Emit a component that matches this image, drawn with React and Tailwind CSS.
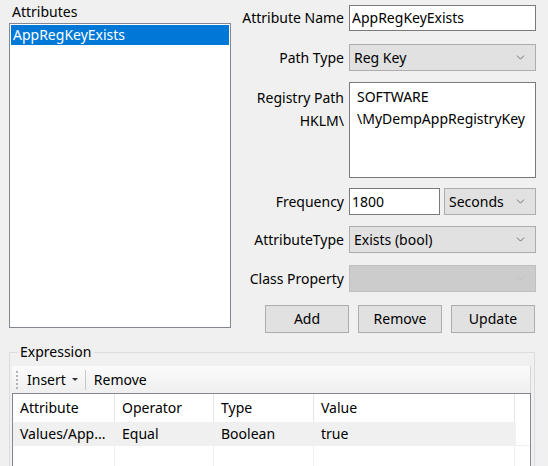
import { ChevronDown } from "lucide-react";

const FONT = { fontFamily: "'Noto Sans', 'Open Sans', sans-serif" };

const COLS = [
  { label: "Attribute", width: "w-[102px]", value: "Values/App..." },
  { label: "Operator", width: "w-[99px]", value: "Equal" },
  { label: "Type", width: "w-[100px]", value: "Boolean" },
  { label: "Value", width: "w-[201px]", value: "true" },
];

function Label({ children, className = "" }) {
  return (
    <div className={"w-[109px] pr-[5px] text-right whitespace-nowrap " + className}>
      {children}
    </div>
  );
}

function Combo({ value, className = "", disabled }) {
  return (
    <div
      className={
        "flex items-center h-[27px] border pl-[4px] pr-[8px] " +
        (disabled
          ? "bg-[#cccccc] border-[#bfbfbf] text-[#6d6d6d]"
          : "bg-[#e1e1e1] border-[#adadad]") +
        " " +
        className
      }
    >
      <span className="flex-1 whitespace-nowrap">{value}</span>
      <ChevronDown
        className={"w-[13px] h-[13px] " + (disabled ? "text-[#bdbdbd]" : "text-[#555]")}
        strokeWidth={1.5}
      />
    </div>
  );
}

function Btn({ children }) {
  return (
    <div className="w-[84px] h-[28px] flex items-center justify-center bg-[#e1e1e1] border border-[#adadad]">
      {children}
    </div>
  );
}

export default function App() {
  return (
    <div
      style={FONT}
      className="w-[548px] h-[466px] bg-[#f0f0f0] overflow-hidden text-[14px] leading-[20px] text-black"
    >
      <div className="flex h-[333px]">
        {/* attributes list */}
        <div className="pl-[9px] w-[240px]">
          <div className="pl-[3px] pt-[2px] h-[23px]">Attributes</div>
          <div className="w-[222px] h-[305px] bg-white border border-[#828790] p-[1px]">
            <div className="h-[20px] bg-[#0078d7] text-white pl-[2px] leading-[20px]">
              AppRegKeyExists
            </div>
          </div>
        </div>

        {/* form */}
        <div className="flex flex-col pt-[5px]">
          <div className="flex items-center">
            <Label>Attribute Name</Label>
            <div className="w-[187px] h-[26px] bg-white border border-[#7a7a7a] pl-[2px] flex items-center">
              AppRegKeyExists
            </div>
          </div>

          <div className="flex items-center mt-[13px]">
            <Label>Path Type</Label>
            <Combo value="Reg Key" className="w-[187px]" />
          </div>

          <div className="flex mt-[11px]">
            <Label className="pt-[4px] leading-[23px]">
              Registry Path
              <br />
              HKLM\
            </Label>
            <div className="w-[187px] h-[96px] bg-white border border-[#7a7a7a] pl-[7px] pt-[3px] leading-[22px]">
              SOFTWARE
              <br />
              \MyDempAppRegistryKey
            </div>
          </div>

          <div className="flex items-center mt-[10px]">
            <Label>Frequency</Label>
            <div className="w-[91px] h-[27px] bg-white border border-[#7a7a7a] pl-[2px] flex items-center">
              1800
            </div>
            <Combo value="Seconds" className="w-[92px] ml-[4px] pr-[6px]" />
          </div>

          <div className="flex items-center mt-[11px]">
            <Label className="pr-[2px]">AttributeType</Label>
            <Combo value="Exists (bool)" className="w-[187px]" />
          </div>

          <div className="flex items-center mt-[12px]">
            <Label>Class Property</Label>
            <Combo value="" className="w-[187px]" disabled />
          </div>

          <div className="flex mt-[13px] pl-[25px] gap-[9px]">
            <Btn>Add</Btn>
            <Btn>Remove</Btn>
            <Btn>Update</Btn>
          </div>
        </div>
      </div>

      {/* expression group */}
      <div className="relative ml-[9px] mt-[19px] w-[526px] h-[200px] border border-[#dcdcdc] px-[2px] pt-[13px]">
        <div className="absolute -top-[11px] left-[7px] px-[3px] bg-[#f0f0f0]">Expression</div>

        <div className="h-[27px] flex items-center bg-gradient-to-b from-[#fbfbfb] to-[#efefef] border-r border-[#d6d6d6] mr-[1px]">
          <div className="ml-[4px] flex flex-col gap-[2px]">
            {[0, 1, 2, 3, 4].map((i) => (
              <div key={i} className="w-[2px] h-[2px] bg-[#b4b4b4]" />
            ))}
          </div>
          <span className="ml-[9px]">Insert</span>
          <span className="ml-[6px] w-0 h-0 border-l-[3px] border-r-[3px] border-t-[3px] border-l-transparent border-r-transparent border-t-[#333]" />
          <span className="ml-[7px] w-[1px] h-[20px] bg-[#c8c8c8]" />
          <span className="ml-[8px]">Remove</span>
        </div>

        <div className="h-[100px] bg-white border-l border-t border-r border-[#828790] mr-[1px]">
          <div className="flex h-[28px]">
            {COLS.map((c) => (
              <div
                key={c.label}
                className={c.width + " border-r border-[#e5e5e5] pl-[7px] flex items-center"}
              >
                {c.label}
              </div>
            ))}
          </div>
          <div className="flex h-[24px]">
            {COLS.map((c, i) => (
              <div
                key={c.label}
                className={
                  (i === COLS.length - 1 ? "w-[202px]" : c.width) +
                  " bg-[#f0f0f0] pl-[7px] flex items-center"
                }
              >
                {c.value}
              </div>
            ))}
            <div className="flex-1 border-b border-[#f0f0f0]" />
          </div>
          <div className="flex h-[30px]">
            {COLS.map((c) => (
              <div key={c.label} className={c.width + " border-r border-[#f0f0f0]"} />
            ))}
          </div>
        </div>
      </div>
    </div>
  );
}
